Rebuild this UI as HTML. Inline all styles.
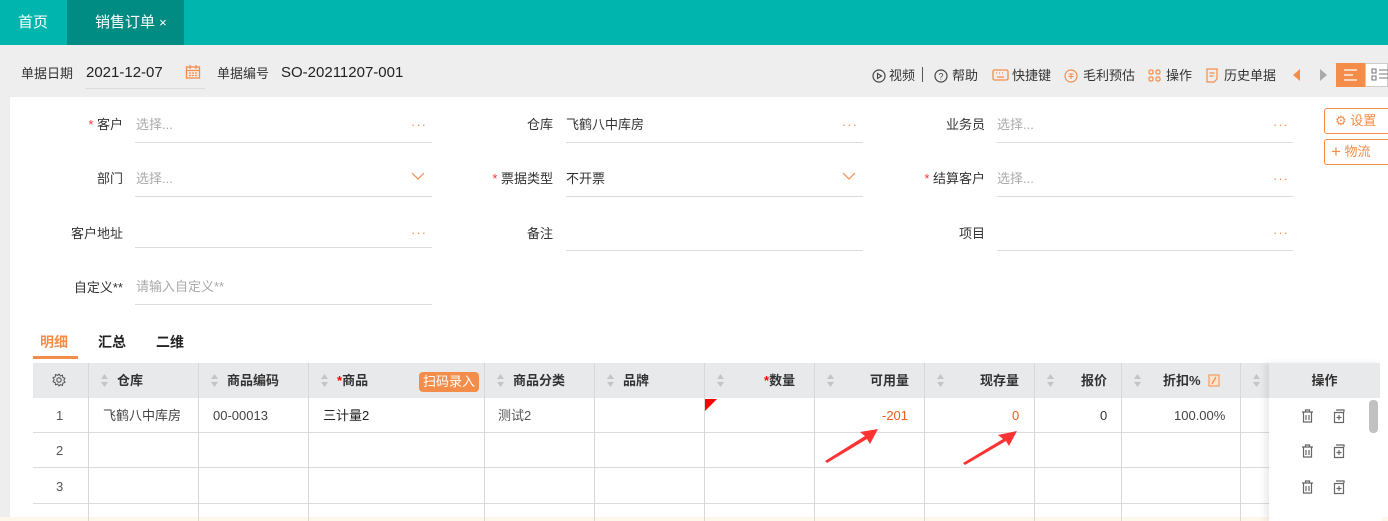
<!DOCTYPE html>
<html><head><meta charset="utf-8"><style>
*{margin:0;padding:0;box-sizing:border-box}
body{width:1388px;height:521px;overflow:hidden;background:#eeeeee;font-family:"Liberation Sans","Noto Sans CJK SC",sans-serif;font-size:13px;color:#333;position:relative}
.a{position:absolute;white-space:nowrap;line-height:16px}
.top{left:0;top:0;width:1388px;height:45px;background:#00b5ad}
.lbl{text-align:right;width:120px;font-size:13px;color:#333}
.inp{height:1px;background:#dcdcdc}
.ph{color:#aaa;font-size:13px}
.dots{color:#f58d4a;font-size:13px;letter-spacing:1px}
.th{background:#e8e9eb;height:35px;top:363px}
.vl{width:1px;background:#d8d8d8}
.hl{height:1px;background:#dcdcdc}
.o{color:#f58d4a}
.b{font-weight:bold}
</style></head><body>
<svg width="0" height="0" style="position:absolute"><defs>
<g id="s"><path d="M0 5 L3.5 0 L7 5Z M0 8 L3.5 13 L7 8Z" fill="#c4c4c4"/></g>
<g id="tr"><path d="M1 3h11M4.5 3V1h4v2M2.5 3v10h8V3M5 6v5M8 6v5" fill="none" stroke="#666" stroke-width="1.2"/></g>
<g id="cp"><path d="M3 1h8v2M1.5 3.5h9v10h-9z M6 6v5M3.5 8.5h5" fill="none" stroke="#666" stroke-width="1.2"/></g>
</defs></svg>
<div class="a top"></div>
<div class="a" style="left:67px;top:0;width:117px;height:45px;background:#008b83"></div>
<div class="a" style="left:18px;top:15px;color:#fff;font-size:15px">首页</div>
<div class="a" style="left:95px;top:15px;color:#fff;font-size:15px">销售订单 <span style="font-size:13px">×</span></div>

<div class="a" style="left:21px;top:66px">单据日期</div>
<div class="a" style="left:86px;top:65px;font-size:15px;color:#222">2021-12-07</div>
<svg class="a" style="left:185px;top:64px" width="16" height="16" viewBox="0 0 16 16"><rect x="1.5" y="3" width="13" height="11" fill="none" stroke="#f58d4a" stroke-width="1.3"/><path d="M1.5 6.5h13M5 1v4M11 1v4M4 9h2M7 9h2M10 9h2M4 11.5h2M7 11.5h2M10 11.5h2" stroke="#f58d4a" stroke-width="1.2"/></svg>
<div class="a hl" style="left:85px;top:88px;width:120px"></div>
<div class="a" style="left:217px;top:66px">单据编号</div>
<div class="a" style="left:281px;top:65px;font-size:15px;color:#222">SO-20211207-001</div>

<svg class="a" style="left:872px;top:69px" width="14" height="14"><circle cx="7" cy="7" r="6" fill="none" stroke="#444" stroke-width="1.2"/><path d="M5.5 4.5v5l4-2.5z" fill="none" stroke="#444" stroke-width="1.1"/></svg>
<div class="a" style="left:889px;top:68px">视频</div>
<div class="a" style="left:922px;top:67px;width:1px;height:15px;background:#555"></div>
<svg class="a" style="left:934px;top:69px" width="14" height="14"><circle cx="7" cy="7" r="6" fill="none" stroke="#444" stroke-width="1.2"/><text x="7" y="10.5" font-size="9" text-anchor="middle" fill="#444" font-family="Liberation Sans">?</text></svg>
<div class="a" style="left:952px;top:68px">帮助</div>
<svg class="a" style="left:992px;top:69px" width="17" height="13"><rect x="1" y="1" width="15" height="10" rx="1.5" fill="none" stroke="#f58d4a" stroke-width="1.3"/><path d="M4 4h1M7 4h1M10 4h1M13 4h0M5 8h7" stroke="#f58d4a" stroke-width="1.2"/></svg>
<div class="a" style="left:1012px;top:68px">快捷键</div>
<svg class="a" style="left:1064px;top:69px" width="14" height="14"><circle cx="7" cy="7" r="6" fill="none" stroke="#f58d4a" stroke-width="1.2"/><path d="M4.5 5h5M4.5 7.5h5M7 5v5" stroke="#f58d4a" stroke-width="1.1"/></svg>
<div class="a" style="left:1083px;top:68px">毛利预估</div>
<svg class="a" style="left:1148px;top:69px" width="13" height="13"><g fill="none" stroke="#f58d4a" stroke-width="1.2"><rect x="1" y="1" width="4" height="4" rx="1.5"/><rect x="8" y="1" width="4" height="4" rx="1.5"/><rect x="1" y="8" width="4" height="4" rx="1.5"/><rect x="8" y="8" width="4" height="4" rx="1.5"/></g></svg>
<div class="a" style="left:1166px;top:68px">操作</div>
<svg class="a" style="left:1206px;top:68px" width="12" height="15"><path d="M1 1h10v10l-3 3H1z M3.5 5h5M3.5 8h4" fill="none" stroke="#f58d4a" stroke-width="1.2"/></svg>
<div class="a" style="left:1224px;top:68px">历史单据</div>
<svg class="a" style="left:1292px;top:68px" width="10" height="14"><path d="M8 1L1 7l7 6z" fill="#f58d4a"/></svg>
<svg class="a" style="left:1318px;top:68px" width="10" height="14"><path d="M2 1l7 6-7 6z" fill="#aaa"/></svg>
<div class="a" style="left:1336px;top:63px;width:29px;height:24px;background:#f58d4a"></div>
<svg class="a" style="left:1343px;top:68px" width="15" height="14"><path d="M1 2h13M1 7h9M1 12h13" stroke="#fff" stroke-width="1.3"/></svg>
<div class="a" style="left:1365px;top:63px;width:23px;height:24px;background:#fff;border:1px solid #ccc"></div>
<svg class="a" style="left:1371px;top:68px" width="17" height="14"><path d="M1 1h4v4H1zM1 8h4v4H1zM8 2h9M8 6h9M8 10h9" fill="none" stroke="#777" stroke-width="1.1"/></svg>

<div class="a" style="left:10px;top:97px;width:1378px;height:424px;background:#fff"></div>

<!-- form -->
<div class="a lbl" style="left:3px;top:117px"><span style="color:#f33">*</span> 客户</div>
<div class="a ph" style="left:136px;top:117px">选择...</div><div class="a dots" style="left:411px;top:117px">···</div>
<div class="a inp" style="left:135px;top:142px;width:297px"></div>
<div class="a lbl" style="left:3px;top:171px">部门</div>
<div class="a ph" style="left:136px;top:171px">选择...</div>
<svg class="a" style="left:411px;top:172px" width="14" height="9"><path d="M1 1l6 6 6-6" fill="none" stroke="#f58d4a" stroke-width="1.2"/></svg>
<div class="a inp" style="left:135px;top:196px;width:297px"></div>
<div class="a lbl" style="left:3px;top:226px">客户地址</div>
<div class="a dots" style="left:411px;top:225px">···</div>
<div class="a inp" style="left:135px;top:247px;width:297px"></div>
<div class="a lbl" style="left:3px;top:280px">自定义**</div>
<div class="a ph" style="left:136px;top:279px">请输入自定义**</div>
<div class="a inp" style="left:135px;top:304px;width:297px"></div>

<div class="a lbl" style="left:433px;top:117px">仓库</div>
<div class="a" style="left:566px;top:117px">飞鹤八中库房</div><div class="a dots" style="left:842px;top:117px">···</div>
<div class="a inp" style="left:566px;top:142px;width:297px"></div>
<div class="a lbl" style="left:433px;top:171px"><span style="color:#f33">*</span> 票据类型</div>
<div class="a" style="left:566px;top:171px">不开票</div>
<svg class="a" style="left:842px;top:172px" width="14" height="9"><path d="M1 1l6 6 6-6" fill="none" stroke="#f58d4a" stroke-width="1.2"/></svg>
<div class="a inp" style="left:566px;top:196px;width:297px"></div>
<div class="a lbl" style="left:433px;top:226px">备注</div>
<div class="a inp" style="left:566px;top:250px;width:297px"></div>

<div class="a lbl" style="left:865px;top:117px">业务员</div>
<div class="a ph" style="left:997px;top:117px">选择...</div><div class="a dots" style="left:1273px;top:117px">···</div>
<div class="a inp" style="left:997px;top:142px;width:296px"></div>
<div class="a lbl" style="left:865px;top:171px"><span style="color:#f33">*</span> 结算客户</div>
<div class="a ph" style="left:997px;top:171px">选择...</div><div class="a dots" style="left:1273px;top:171px">···</div>
<div class="a inp" style="left:997px;top:196px;width:296px"></div>
<div class="a lbl" style="left:865px;top:226px">项目</div>
<div class="a dots" style="left:1273px;top:225px">···</div>
<div class="a inp" style="left:997px;top:250px;width:296px"></div>

<div class="a o" style="left:1324px;top:108px;width:70px;height:26px;border:1px solid #f58d4a;border-radius:3px;padding:4px 0 0 10px;font-size:13px">⚙ 设置</div>
<div class="a o" style="left:1324px;top:139px;width:70px;height:26px;border:1px solid #f58d4a;border-radius:3px;padding:4px 0 0 6px;font-size:13px"><span style="font-size:17px;vertical-align:-1px">+</span> 物流</div>

<!-- tabs -->
<div class="a b" style="left:40px;top:334px;font-size:14px;color:#f58d4a">明细</div>
<div class="a b" style="left:98px;top:334px;font-size:14px;color:#222">汇总</div>
<div class="a b" style="left:156px;top:334px;font-size:14px;color:#222">二维</div>
<div class="a" style="left:33px;top:356px;width:45px;height:3px;background:#f58d4a"></div>

<!-- table -->
<div class="a th" style="left:33px;width:1347px"></div>
<div class="a hl" style="left:33px;top:432px;width:1240px"></div>
<div class="a hl" style="left:33px;top:467px;width:1240px"></div>
<div class="a hl" style="left:33px;top:503px;width:1240px"></div>
<div class="a" style="left:0;top:517px;width:1388px;height:4px;background:#fdf6ea"></div>
<div class="a vl" style="left:88px;top:363px;height:158px"></div>
<div class="a vl" style="left:198px;top:363px;height:158px"></div>
<div class="a vl" style="left:308px;top:363px;height:158px"></div>
<div class="a vl" style="left:484px;top:363px;height:158px"></div>
<div class="a vl" style="left:594px;top:363px;height:158px"></div>
<div class="a vl" style="left:704px;top:363px;height:158px"></div>
<div class="a vl" style="left:814px;top:363px;height:158px"></div>
<div class="a vl" style="left:924px;top:363px;height:158px"></div>
<div class="a vl" style="left:1034px;top:363px;height:158px"></div>
<div class="a vl" style="left:1121px;top:363px;height:158px"></div>
<div class="a vl" style="left:1240px;top:363px;height:158px"></div>

<svg class="a" style="left:52px;top:373px" width="14" height="14"><circle cx="7" cy="7" r="2.2" fill="none" stroke="#555" stroke-width="1.1"/><path d="M7 1l1.3 2 2.2-.8.3 2.3 2.2.8-1.2 2 1.2 2-2.2.8-.3 2.3-2.2-.8L7 13l-1.3-2-2.2.8-.3-2.3-2.2-.8 1.2-2-1.2-2 2.2-.8.3-2.3 2.2.8z" fill="none" stroke="#555" stroke-width="1"/></svg>
<svg class="a" style="left:101px;top:374px" width="7" height="13"><use href="#s"/></svg><div class="a b" style="left:117px;top:373px">仓库</div>
<svg class="a" style="left:211px;top:374px" width="7" height="13"><use href="#s"/></svg><div class="a b" style="left:227px;top:373px">商品编码</div>
<svg class="a" style="left:321px;top:374px" width="7" height="13"><use href="#s"/></svg><div class="a b" style="left:337px;top:373px"><span style="color:#f00">*</span>商品</div>
<div class="a" style="left:419px;top:372px;width:60px;height:20px;background:#f58d4a;border-radius:4px;color:#fff;text-align:center;line-height:19px">扫码录入</div>
<svg class="a" style="left:497px;top:374px" width="7" height="13"><use href="#s"/></svg><div class="a b" style="left:513px;top:373px">商品分类</div>
<svg class="a" style="left:607px;top:374px" width="7" height="13"><use href="#s"/></svg><div class="a b" style="left:623px;top:373px">品牌</div>
<svg class="a" style="left:717px;top:374px" width="7" height="13"><use href="#s"/></svg><div class="a b" style="left:764px;top:373px"><span style="color:#f00">*</span>数量</div>
<svg class="a" style="left:827px;top:374px" width="7" height="13"><use href="#s"/></svg><div class="a b" style="left:870px;top:373px">可用量</div>
<svg class="a" style="left:937px;top:374px" width="7" height="13"><use href="#s"/></svg><div class="a b" style="left:980px;top:373px">现存量</div>
<svg class="a" style="left:1047px;top:374px" width="7" height="13"><use href="#s"/></svg><div class="a b" style="left:1081px;top:373px">报价</div>
<svg class="a" style="left:1134px;top:374px" width="7" height="13"><use href="#s"/></svg><div class="a b" style="left:1163px;top:373px">折扣%</div>
<svg class="a" style="left:1208px;top:374px" width="12" height="13"><rect x="1" y="1" width="10" height="11" fill="#fde3d2" stroke="#f58d4a"/><path d="M8 3L4 10" stroke="#f58d4a" stroke-width="1.3"/></svg>
<svg class="a" style="left:1253px;top:374px" width="7" height="13"><use href="#s"/></svg>

<div class="a" style="left:56px;top:408px;color:#555">1</div>
<div class="a" style="left:56px;top:443px;color:#555">2</div>
<div class="a" style="left:56px;top:479px;color:#555">3</div>
<div class="a" style="left:103px;top:408px;color:#444">飞鹤八中库房</div>
<div class="a" style="left:213px;top:408px;color:#444">00-00013</div>
<div class="a" style="left:323px;top:408px;color:#222">三计量2</div>
<div class="a" style="left:498px;top:408px;color:#555">测试2</div>
<div class="a" style="left:705px;top:399px;width:0;height:0;border-top:12px solid #f00;border-right:12px solid transparent"></div>
<div class="a" style="left:882px;top:408px;color:#f35a1d">-201</div>
<div class="a" style="left:1012px;top:408px;color:#f35a1d">0</div>
<div class="a" style="left:1100px;top:408px">0</div>
<div class="a" style="left:1174px;top:408px;color:#444">100.00%</div>
<svg class="a" style="left:820px;top:425px" width="220" height="42"><path d="M5 36 L45 11 L40 7 L58 4 L50 19 L47 14 L7 38Z" fill="#f33"/><path d="M143 38 L183 14 L178 10 L197 6 L189 21 L186 16 L145 40Z" fill="#f33"/></svg>

<!-- operation column -->
<div class="a" style="left:1269px;top:363px;width:113px;height:158px;background:#fff;box-shadow:-4px 0 6px rgba(0,0,0,.08)"></div>
<div class="a b" style="left:1269px;top:363px;width:111px;height:35px;background:#e8e9eb;text-align:center;line-height:35px">操作</div>
<div class="a" style="left:1369px;top:400px;width:9px;height:33px;background:#c1c1c1;border-radius:4px"></div>
<svg class="a" style="left:1301px;top:409px" width="13" height="15"><use href="#tr"/></svg><svg class="a" style="left:1333px;top:409px" width="13" height="15"><use href="#cp"/></svg>
<svg class="a" style="left:1301px;top:444px" width="13" height="15"><use href="#tr"/></svg><svg class="a" style="left:1333px;top:444px" width="13" height="15"><use href="#cp"/></svg>
<svg class="a" style="left:1301px;top:480px" width="13" height="15"><use href="#tr"/></svg><svg class="a" style="left:1333px;top:480px" width="13" height="15"><use href="#cp"/></svg>
</body></html>
